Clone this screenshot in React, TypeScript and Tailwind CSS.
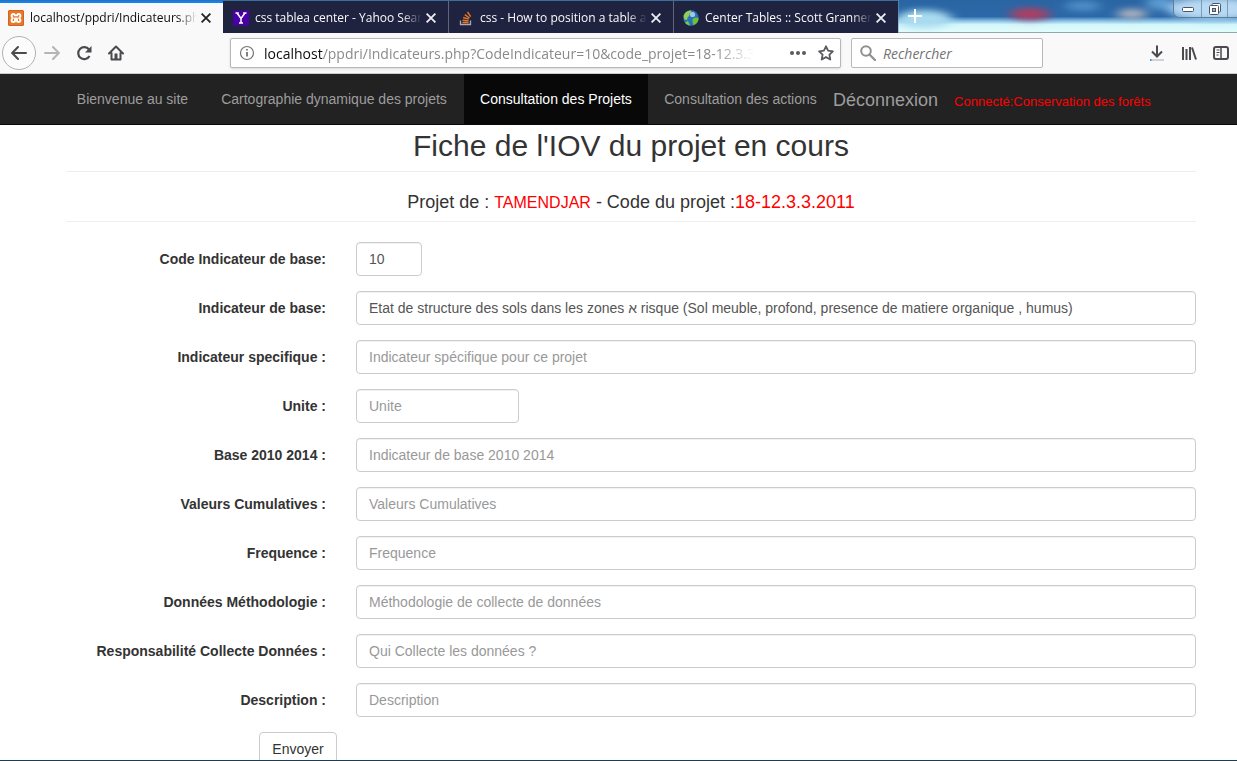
import { useState } from 'react';
import type { ReactNode } from 'react';

function XamppIcon() {
  return (
    <svg width="16" height="16" viewBox="0 0 16 16" className="shrink-0" aria-hidden="true">
      <rect width="16" height="16" rx="1.500" fill="#e8772a" />
      <rect x=".5" y=".5" width="15" height="15" rx="1.500" fill="none" stroke="#d0651c" />
      <path
        d="M7 6.200V5.500A1.500 1.500 0 0 0 5.500 4H5.200A1.500 1.500 0 0 0 3.700 5.500v1L4.800 8 3.700 9.500v1A1.500 1.500 0 0 0 5.200 12h.3A1.500 1.500 0 0 0 7 10.500V8.500h2v2a1.500 1.500 0 0 0 1.500 1.500h.3a1.500 1.500 0 0 0 1.500-1.500v-1L11.200 8l1.100-1.500v-1A1.500 1.500 0 0 0 10.800 4h-.3A1.500 1.500 0 0 0 9 5.500v.7"
        fill="none"
        stroke="#fff"
        strokeWidth="2"
        strokeLinejoin="round"
      />
    </svg>
  );
}

function YahooIcon() {
  return (
    <svg width="16" height="16" viewBox="0 0 16 16" className="shrink-0" aria-hidden="true">
      <path d="M0 0 Q8 1.500 16 0V16Q8 14.500 0 16z" fill="#4a00a8" />
      <path d="M4 3 8 8.500 12 3M8 8.500V13M2.500 3h3.300M10.200 3h3.300M6 13h4" fill="none" stroke="#fff" strokeWidth="1.500" />
    </svg>
  );
}

function StackIcon() {
  return (
    <svg width="16" height="16" viewBox="0 0 16 16" className="shrink-0" aria-hidden="true">
      <path d="M2.500 10.500v4h10v-4" fill="none" stroke="#a9abb0" strokeWidth="1.300" />
      <path d="M4.500 12.500h6M4.600 10.200l6 .7M5.200 7.500l5.600 1.700M6.800 4.600l4.700 3.400M9.500 2l3.200 4.700" fill="none" stroke="#e87722" strokeWidth="1.400" />
    </svg>
  );
}

function GlobeIcon() {
  return (
    <svg width="16" height="16" viewBox="0 0 16 16" className="shrink-0" aria-hidden="true">
      <circle cx="8" cy="8" r="7.700" fill="#2a70bd" />
      <path d="M.5 6C1.500 2.500 4.500.3 8 .4L8.500 2 6.500 4 6 6 4.500 7.500 4 10 1.500 9.500z" fill="#8fd052" />
      <path d="M9.500 9l3-1.500L15.600 8c0 3.500-2 6-5 7.200l-1-3z" fill="#6cc232" />
      <path d="M2 12.500 5 11l2 4.500C5 15.300 3 14.300 2 12.500z" fill="#7fcb3c" />
      <circle cx="9.500" cy="4.500" r="2.600" fill="#d4edff" opacity=".7" />
    </svg>
  );
}

function Cross({ dark }: { dark?: boolean }) {
  return (
    <svg width="10" height="10" viewBox="0 0 10 10" aria-hidden="true">
      <path d="M.6.6l8.800 8.800M9.400.6.6 9.400" stroke={dark ? '#222' : '#f0f0f4'} strokeWidth="1.800" />
    </svg>
  );
}

type Tab = { title: string; icon: ReactNode; edge: string };

const tabs: Tab[] = [
  {
    title: 'localhost/ppdri/Indicateurs.php',
    icon: <XamppIcon />,
    edge: 'w-[223px] border-t-2 border-[#0a84ff] bg-[#f9f9fa] pl-2 pr-3 text-[#0c0c0d]',
  },
  {
    title: 'css tablea center - Yahoo Search',
    icon: <YahooIcon />,
    edge: 'w-[225px] border-l border-[#202340] bg-[#202340] pl-[9px] pr-3 pt-[2px] text-[#f9f9fa]',
  },
  {
    title: 'css - How to position a table at',
    icon: <StackIcon />,
    edge: 'w-[225px] border-l border-[#62647c] bg-[#202340] pl-[9px] pr-3 pt-[2px] text-[#f9f9fa]',
  },
  {
    title: 'Center Tables :: Scott Grannem',
    icon: <GlobeIcon />,
    edge: 'w-[225px] border-l border-[#62647c] bg-[#202340] pl-[9px] pr-3 pt-[2px] text-[#f9f9fa]',
  },
];

function Sky() {
  return (
    <svg className="absolute inset-0 h-full w-full" viewBox="0 0 339 33" preserveAspectRatio="none" aria-hidden="true">
      <defs>
        <linearGradient id="sky" x1="0" y1="0" x2="0" y2="1">
          <stop offset="0" stopColor="#2a65a3" />
          <stop offset=".5" stopColor="#2b68a8" />
          <stop offset=".62" stopColor="#7fb8e0" />
          <stop offset=".74" stopColor="#d2f6fb" />
          <stop offset="1" stopColor="#e4fdfb" />
        </linearGradient>
        <filter id="soft" x="-50%" y="-100%" width="200%" height="300%">
          <feGaussianBlur stdDeviation="6 3" />
        </filter>
      </defs>
      <rect width="339" height="33" fill="url(#sky)" />
      <g filter="url(#soft)">
        <ellipse cx="26" cy="19" rx="28" ry="9" fill="#a9dcf0" />
        <ellipse cx="185" cy="6" rx="18" ry="5" fill="#4f8fc8" />
        <ellipse cx="132" cy="14" rx="20" ry="6" fill="#b03c60" />
        <ellipse cx="234" cy="14" rx="15" ry="5" fill="#b0b4bf" />
        <ellipse cx="262" cy="3" rx="14" ry="7" fill="#5c9bd2" />
        <ellipse cx="315" cy="9" rx="45" ry="11" fill="#9fcdf0" />
      </g>
      <path d="M0 32.500h339" stroke="#8fa9ac" />
      <path d="M0 0v33" stroke="#7397b5" />
    </svg>
  );
}

function TabStrip() {
  return (
    <header className="flex h-[33px] overflow-hidden bg-[#3b6f9e]">
      <div className="flex shrink-0 pt-px" role="tablist">
        {tabs.map((tab, i) => (
          <div key={tab.title} className={`flex items-center ${tab.edge}`}>
            {tab.icon}
            <button
              role="tab"
              aria-selected={i === 0}
              className="ml-[6px] min-w-0 flex-1 overflow-hidden whitespace-nowrap mask-r-from-88% text-left text-[12px]"
            >
              {tab.title}
            </button>
            <button aria-label="Fermer l'onglet" className="ml-1">
              <Cross dark={i === 0} />
            </button>
          </div>
        ))}
      </div>
      <div className="relative flex flex-1 justify-between">
        <Sky />
        <button aria-label="Nouvel onglet" className="relative ml-2 h-8">
          <svg width="18" height="18" viewBox="0 0 18 18" aria-hidden="true">
            <path d="M9 2v14M2 9h14" stroke="#fff" strokeWidth="2" />
          </svg>
        </button>
        <div className="relative flex h-[18px] overflow-hidden rounded-bl-md border-b border-l border-[#5d7d9a] bg-white/25">
          <button aria-label="Réduire" className="flex w-7 items-center justify-center border-r border-[#7f9bb4] pt-[3px]">
            <svg width="12" height="6" viewBox="0 0 12 6" aria-hidden="true">
              <rect x=".5" y=".5" width="11" height="4" rx="1" fill="#fff" stroke="#4c5566" />
            </svg>
          </button>
          <button aria-label="Restaurer" className="flex w-[26px] items-center justify-center border-r border-[#7f9bb4]">
            <svg width="12" height="12" viewBox="0 0 12 12" aria-hidden="true">
              <rect x="3" y=".5" width="8.500" height="8.500" rx="1" fill="#fff" stroke="#4c5566" />
              <rect x=".5" y="2.500" width="9" height="9" rx="1" fill="#fff" stroke="#4c5566" />
              <rect x="3.500" y="5.500" width="3" height="3" fill="#8fb6da" stroke="#4c5566" />
            </svg>
          </button>
          <span className="w-[9px]" />
        </div>
      </div>
    </header>
  );
}

function Toolbar() {
  return (
    <div className="flex h-[41px] items-center border-b border-[#ccc] bg-[#f9f9fa] pl-[2px] pr-2 text-[#4a4a4f]">
      <button aria-label="Page précédente" className="flex size-[34px] items-center justify-center rounded-full border border-[#b1b1b3] bg-[#fcfcfc]">
        <svg width="16" height="16" viewBox="0 0 16 16" fill="none" stroke="currentColor" strokeWidth="2" strokeLinecap="round" aria-hidden="true">
          <path d="M15 8H1.500M7 2 1.200 8 7 14" />
        </svg>
      </button>
      <button aria-label="Page suivante" className="ml-2 text-[#b5b5b7]">
        <svg width="16" height="16" viewBox="0 0 16 16" fill="none" stroke="currentColor" strokeWidth="2" strokeLinecap="round" aria-hidden="true">
          <path d="M1 8h13.500M9 2l5.800 6L9 14" />
        </svg>
      </button>
      <button aria-label="Actualiser" className="ml-4">
        <svg width="16" height="16" viewBox="0 0 16 16" aria-hidden="true">
          <path d="M13 4.500A6 6 0 1 0 13.500 11" fill="none" stroke="currentColor" strokeWidth="2.200" />
          <path d="M15.500 1v6.500H9z" fill="currentColor" />
        </svg>
      </button>
      <button aria-label="Accueil" className="ml-4">
        <svg width="16" height="16" viewBox="0 0 16 16" aria-hidden="true">
          <path d="M1 8.500 8 1.500l7 7M3.500 8v6.500h9V8" fill="none" stroke="currentColor" strokeWidth="2" strokeLinecap="round" strokeLinejoin="round" />
          <path d="M6.500 8.500h3V14h-3z" fill="currentColor" />
        </svg>
      </button>

      <div className="ml-[106px] flex h-[30px] min-w-0 flex-1 items-center rounded-xs border border-[#b8b8b8] bg-white pl-2 pr-[6px] shadow-sm">
        <svg width="16" height="16" viewBox="0 0 16 16" className="shrink-0" aria-hidden="true">
          <circle cx="8" cy="8" r="6.500" fill="none" stroke="#737373" strokeWidth="1.200" />
          <path d="M8 7v4.500M8 4v1.600" stroke="#737373" strokeWidth="1.800" />
        </svg>
        <div className="ml-[9px] min-w-0 flex-1 overflow-hidden whitespace-nowrap mask-r-from-92% text-[14px] text-[#8a8a8c]">
          <span className="text-[#0c0c0d]">localhost</span>/ppdri/Indicateurs.php?CodeIndicateur=10&amp;code_projet=18-12.3.3.201
        </div>
        <button aria-label="Actions de la page" className="ml-9">
          <svg width="16" height="16" viewBox="0 0 16 16" fill="#5a5a5e" aria-hidden="true">
            <circle cx="2" cy="8" r="2" />
            <circle cx="8" cy="8" r="2" />
            <circle cx="14" cy="8" r="2" />
          </svg>
        </button>
        <button aria-label="Marquer cette page" className="ml-3">
          <svg width="16" height="16" viewBox="0 0 16 16" aria-hidden="true">
            <path d="M8 1.300l2.100 4.400 4.800.6-3.500 3.300.9 4.900L8 12.100l-4.300 2.400.9-4.900L1.100 6.300l4.800-.6z" fill="none" stroke="#5a5a5e" strokeWidth="1.800" strokeLinejoin="round" />
          </svg>
        </button>
      </div>

      <label className="ml-[10px] flex h-[30px] w-[192px] items-center rounded-xs border border-[#b8b8b8] bg-white px-2">
        <svg width="16" height="16" viewBox="0 0 16 16" className="shrink-0" aria-hidden="true">
          <circle cx="6" cy="6" r="4.800" fill="none" stroke="#8f8f91" strokeWidth="2" />
          <path d="M9.500 9.500 15 15" stroke="#8f8f91" strokeWidth="2.200" strokeLinecap="round" />
        </svg>
        <input
          aria-label="Rechercher"
          placeholder="Rechercher"
          className="ml-[7px] w-full min-w-0 text-[14px] outline-none placeholder:italic placeholder:text-[#737373]"
        />
      </label>

      <div className="ml-[106px] flex items-center gap-4">
        <button aria-label="Téléchargements">
          <svg width="16" height="16" viewBox="0 0 16 16" aria-hidden="true">
            <path d="M8 .5V11M3 6.500l5 5 5-5" fill="none" stroke="currentColor" strokeWidth="2" />
            <path d="M1 15h14" stroke="#c4c4c6" strokeWidth="1.500" />
            <path d="M1 15h1.500" stroke="#0a84ff" strokeWidth="1.500" />
          </svg>
        </button>
        <button aria-label="Bibliothèque">
          <svg width="16" height="16" viewBox="0 0 16 16" aria-hidden="true">
            <path d="M2 2v13M5.500 4v11M9 2v13M11 2.500 15 14.500" fill="none" stroke="currentColor" strokeWidth="2" />
          </svg>
        </button>
        <button aria-label="Panneaux latéraux">
          <svg width="16" height="16" viewBox="0 0 16 16" fill="none" stroke="currentColor" aria-hidden="true">
            <rect x="1" y="2" width="14" height="12" rx="2" strokeWidth="2" />
            <path d="M8 2v12" strokeWidth="1.500" />
            <path d="M3.500 5h3M3.500 7.500h3M3.500 10h2" />
          </svg>
        </button>
      </div>
    </div>
  );
}

const links = [
  { label: 'Bienvenue au site', box: 'w-[143px]' },
  { label: 'Cartographie dynamique des projets', box: 'w-[260px]' },
  { label: 'Consultation des Projets', box: 'w-[184px] bg-[#080808] text-white' },
  { label: 'Consultation des actions', box: 'w-[185px]' },
];

function Navbar() {
  return (
    <nav className="flex h-[51px] items-stretch border-b border-[#080808] bg-[#222] pl-[61px] text-[14px] whitespace-nowrap text-[#9d9d9d]">
      {links.map((link) => (
        <a key={link.label} href="#" className={`py-[15px] text-center leading-5 ${link.box}`}>
          {link.label}
        </a>
      ))}
      <a href="#" className="py-4 pr-4 text-[18px] leading-5">
        Déconnexion
      </a>
      <span className="py-[18px] text-[13px] leading-5 text-[#f00]">Connecté:Conservation des forêts</span>
    </nav>
  );
}

type Field = { id: string; label: string; placeholder?: string; value?: string; width: string };

const fields: Field[] = [
  { id: 'code', label: 'Code Indicateur de base:', value: '10', width: 'w-[66px]' },
  {
    id: 'base',
    label: 'Indicateur de base:',
    value: 'Etat de structure des sols dans les zones א risque (Sol meuble, profond, presence de matiere organique , humus)',
    width: 'flex-1',
  },
  { id: 'specifique', label: 'Indicateur specifique :', placeholder: 'Indicateur spécifique pour ce projet', width: 'flex-1' },
  { id: 'unite', label: 'Unite :', placeholder: 'Unite', width: 'w-[163px]' },
  { id: 'periode', label: 'Base 2010 2014 :', placeholder: 'Indicateur de base 2010 2014', width: 'flex-1' },
  { id: 'valeurs', label: 'Valeurs Cumulatives :', placeholder: 'Valeurs Cumulatives', width: 'flex-1' },
  { id: 'frequence', label: 'Frequence :', placeholder: 'Frequence', width: 'flex-1' },
  { id: 'methodologie', label: 'Données Méthodologie :', placeholder: 'Méthodologie de collecte de données', width: 'flex-1' },
  { id: 'responsabilite', label: 'Responsabilité Collecte Données :', placeholder: 'Qui Collecte les données ?', width: 'flex-1' },
  { id: 'description', label: 'Description :', placeholder: 'Description', width: 'flex-1' },
];

function FieldRow({ field }: { field: Field }) {
  const [value, setValue] = useState(field.value ?? '');
  return (
    <div className="flex items-center gap-[30px]">
      <label htmlFor={field.id} className="w-[260px] text-right font-bold">
        {field.label}
      </label>
      <input
        id={field.id}
        value={value}
        onChange={(e) => setValue(e.target.value)}
        placeholder={field.placeholder}
        className={`h-[34px] min-w-0 rounded border border-[#ccc] bg-white px-3 text-[#555] inset-shadow-2xs outline-none placeholder:text-[#999] ${field.width}`}
      />
    </div>
  );
}

export default function App() {
  return (
    <div className="flex h-screen flex-col overflow-hidden bg-white">
      <div className="shrink-0 font-['Open_Sans','Noto_Sans',sans-serif]">
        <TabStrip />
        <Toolbar />
      </div>
      <div className="min-h-0 flex-1 overflow-hidden border-b border-[#1f3c50] font-['Liberation_Sans',Arial,sans-serif] text-[14px] leading-5 text-[#333]">
        <Navbar />
        <main className="pl-[66px] pr-[41px]">
          <h1 className="border-b border-[#eee] pt-1 pb-[9px] text-center text-[30px] leading-[33px]">
            Fiche de l'IOV du projet en cours
          </h1>
          <h2 className="border-b border-[#eee] pt-5 pb-[9px] text-center text-[18px] leading-5">
            <span className="block h-5">
              Projet de : <span className="text-[16px] text-[#f00]">TAMENDJAR</span> - Code du projet :
              <span className="text-[#f00]">18-12.3.3.2011</span>
            </span>
          </h2>
          <form className="mt-5 flex flex-col gap-[15px]" onSubmit={(e) => e.preventDefault()}>
            {fields.map((field) => (
              <FieldRow key={field.id} field={field} />
            ))}
            <div className="pl-[193px]">
              <button className="h-[34px] w-[78px] rounded border border-[#ccc] bg-white">Envoyer</button>
            </div>
          </form>
        </main>
      </div>
    </div>
  );
}
